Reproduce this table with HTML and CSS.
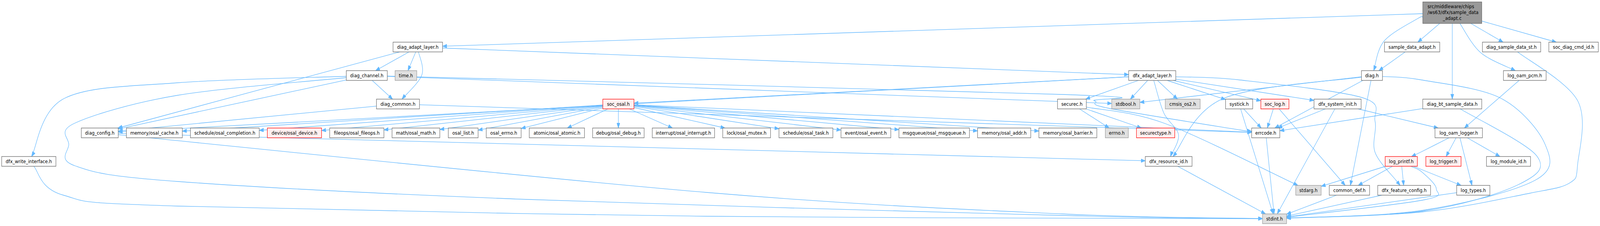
FILE: index.html
```html
<!DOCTYPE html>
<html lang="en">
<head>
<meta charset="utf-8">
<title>sample_data_adapt.c include graph</title>
<link rel="stylesheet" href="styles.css">
</head>
<body>
<div class="graph">
<svg id="graph" viewBox="0 0 4722 579" preserveAspectRatio="none" xmlns="http://www.w3.org/2000/svg">
  <defs>
    <marker id="arrow" markerUnits="userSpaceOnUse" markerWidth="14" markerHeight="10" refX="13" refY="4.75" orient="auto">
      <path class="arrowhead" d="M0,0 L13,4.75 L0,9.5 Z"/>
    </marker>
  </defs>
  <g id="edges"></g>
  <g id="nodes">
    <g class="node root" id="n-top"><rect x="4199" y="5" width="174" height="55"/><text class="left" x="4213" y="21.5">src/middleware/chips</text><text class="left" x="4213" y="36.3">/ws63/dfx/sample_data</text><text x="4286" y="51">_adapt.c</text></g>

    <g class="node" id="n-dal"><rect x="1160" y="108" width="146" height="25"/><text x="1233" y="124.8">diag_adapt_layer.h</text></g>
    <g class="node" id="n-sah"><rect x="4086" y="108" width="163" height="25"/><text x="4167.5" y="124.8">sample_data_adapt.h</text></g>
    <g class="node" id="n-dsd"><rect x="4375" y="108" width="172" height="25"/><text x="4461" y="124.8">diag_sample_data_st.h</text></g>
    <g class="node" id="n-sdc"><rect x="4571" y="108" width="146" height="25"/><text x="4644" y="124.8">soc_diag_cmd_id.h</text></g>

    <g class="node" id="n-dch"><rect x="1022" y="181" width="121" height="25"/><text x="1082.5" y="197.8">diag_channel.h</text></g>
    <g class="node sys" id="n-tim"><rect x="1166" y="181" width="64" height="25"/><text x="1198" y="197.8">time.h</text></g>
    <g class="node" id="n-dfa"><rect x="3331" y="181" width="139" height="25"/><text x="3400.5" y="197.8">dfx_adapt_layer.h</text></g>
    <g class="node" id="n-dia"><rect x="4018" y="181" width="62" height="25"/><text x="4049" y="197.8">diag.h</text></g>
    <g class="node" id="n-lop"><rect x="4437" y="181" width="126" height="25"/><text x="4500" y="197.8">log_oam_pcm.h</text></g>

    <g class="node" id="n-dco"><rect x="1111" y="254" width="127" height="25"/><text x="1174.5" y="270.8">diag_common.h</text></g>
    <g class="node trunc" id="n-sos"><rect x="1779" y="254" width="92" height="25"/><text x="1825" y="270.8">soc_osal.h</text></g>
    <g class="node" id="n-sec"><rect x="3121" y="254" width="85" height="25"/><text x="3163.5" y="270.8">securec.h</text></g>
    <g class="node sys" id="n-sbo"><rect x="3281" y="254" width="83" height="25"/><text x="3322.5" y="270.8">stdbool.h</text></g>
    <g class="node sys" id="n-cms"><rect x="3439" y="254" width="103" height="25"/><text x="3490.5" y="270.8">cmsis_os2.h</text></g>
    <g class="node" id="n-sys"><rect x="3617" y="254" width="80" height="25"/><text x="3657" y="270.8">systick.h</text></g>
    <g class="node trunc" id="n-slg"><rect x="3721" y="254" width="83" height="25"/><text x="3762.5" y="270.8">soc_log.h</text></g>
    <g class="node" id="n-dsi"><rect x="3878" y="254" width="139" height="25"/><text x="3947.5" y="270.8">dfx_system_init.h</text></g>
    <g class="node" id="n-dbt"><rect x="4199" y="254" width="174" height="25"/><text x="4286" y="270.8">diag_bt_sample_data.h</text></g>

    <g class="node" id="n-dcf"><rect x="240" y="328" width="109" height="25"/><text x="294.5" y="344.8">diag_config.h</text></g>
    <g class="node" id="n-oca"><rect x="373" y="328" width="165" height="25"/><text x="455.5" y="344.8">memory/osal_cache.h</text></g>
    <g class="node" id="n-ocp"><rect x="562" y="328" width="203" height="25"/><text x="663.5" y="344.8">schedule/osal_completion.h</text></g>
    <g class="node trunc" id="n-ode"><rect x="789" y="328" width="160" height="25"/><text x="869" y="344.8">device/osal_device.h</text></g>
    <g class="node" id="n-ofo"><rect x="973" y="328" width="160" height="25"/><text x="1053" y="344.8">fileops/osal_fileops.h</text></g>
    <g class="node" id="n-oma"><rect x="1157" y="328" width="141" height="25"/><text x="1227.5" y="344.8">math/osal_math.h</text></g>
    <g class="node" id="n-oli"><rect x="1323" y="328" width="88" height="25"/><text x="1367" y="344.8">osal_list.h</text></g>
    <g class="node" id="n-oer"><rect x="1435" y="328" width="103" height="25"/><text x="1486.5" y="344.8">osal_errno.h</text></g>
    <g class="node" id="n-oat"><rect x="1562" y="328" width="163" height="25"/><text x="1643.5" y="344.8">atomic/osal_atomic.h</text></g>
    <g class="node" id="n-odb"><rect x="1749" y="328" width="152" height="25"/><text x="1825" y="344.8">debug/osal_debug.h</text></g>
    <g class="node" id="n-oin"><rect x="1925" y="328" width="184" height="25"/><text x="2017" y="344.8">interrupt/osal_interrupt.h</text></g>
    <g class="node" id="n-omu"><rect x="2133" y="328" width="141" height="25"/><text x="2203.5" y="344.8">lock/osal_mutex.h</text></g>
    <g class="node" id="n-ota"><rect x="2299" y="328" width="159" height="25"/><text x="2378.5" y="344.8">schedule/osal_task.h</text></g>
    <g class="node" id="n-oev"><rect x="2482" y="328" width="147" height="25"/><text x="2555.5" y="344.8">event/osal_event.h</text></g>
    <g class="node" id="n-omq"><rect x="2653" y="328" width="208" height="25"/><text x="2757" y="344.8">msgqueue/osal_msgqueue.h</text></g>
    <g class="node" id="n-oad"><rect x="2885" y="328" width="157" height="25"/><text x="2963.5" y="344.8">memory/osal_addr.h</text></g>
    <g class="node" id="n-oba"><rect x="3066" y="328" width="171" height="25"/><text x="3151.5" y="344.8">memory/osal_barrier.h</text></g>
    <g class="node sys" id="n-ern"><rect x="3262" y="328" width="68" height="25"/><text x="3296" y="344.8">errno.h</text></g>
    <g class="node trunc" id="n-sct"><rect x="3354" y="328" width="113" height="25"/><text x="3410.5" y="344.8">securectype.h</text></g>
    <g class="node" id="n-erc"><rect x="3694" y="328" width="83" height="25"/><text x="3735.5" y="344.8">errcode.h</text></g>
    <g class="node" id="n-lol"><rect x="4235" y="328" width="140" height="25"/><text x="4305" y="344.8">log_oam_logger.h</text></g>

    <g class="node" id="n-dwi"><rect x="5" y="401" width="160" height="25"/><text x="85" y="417.8">dfx_write_interface.h</text></g>
    <g class="node" id="n-dri"><rect x="3380" y="401" width="138" height="25"/><text x="3449" y="417.8">dfx_resource_id.h</text></g>
    <g class="node trunc" id="n-lpf"><rect x="4088" y="401" width="95" height="25"/><text x="4135.5" y="417.8">log_printf.h</text></g>
    <g class="node trunc" id="n-ltr"><rect x="4208" y="401" width="104" height="25"/><text x="4260" y="417.8">log_trigger.h</text></g>
    <g class="node" id="n-lmi"><rect x="4387" y="401" width="130" height="25"/><text x="4452" y="417.8">log_module_id.h</text></g>

    <g class="node sys" id="n-sta"><rect x="3824" y="475" width="75" height="25"/><text x="3861.5" y="491.8">stdarg.h</text></g>
    <g class="node" id="n-cdf"><rect x="3923" y="475" width="119" height="25"/><text x="3982.5" y="491.8">common_def.h</text></g>
    <g class="node" id="n-dfc"><rect x="4066" y="475" width="156" height="25"/><text x="4144" y="491.8">dfx_feature_config.h</text></g>
    <g class="node" id="n-lty"><rect x="4299" y="475" width="98" height="25"/><text x="4348" y="491.8">log_types.h</text></g>

    <g class="node sys" id="n-sti"><rect x="3726" y="548" width="71" height="25"/><text x="3761.5" y="564.8">stdint.h</text></g>
  </g>
</svg>
</div>
<script src="script.js"></script>
</body>
</html>
```

FILE: styles.css
```css
html, body {
  margin: 0;
  padding: 0;
  background: #ffffff;
  overflow: hidden;
}

.graph {
  width: 100vw;
  height: 579px;
  overflow: hidden;
}

.graph svg {
  display: block;
  width: 100vw;
  height: 579px;
}

.node rect {
  fill: #ffffff;
  stroke: #666666;
  stroke-width: 1.3;
}

.node.sys rect {
  fill: #e0e0e0;
  stroke: #999999;
}

.node.trunc rect {
  fill: #fff0f0;
  stroke: #ff0000;
}

.node.root rect {
  fill: #999999;
  stroke: #666666;
}

.node text {
  font-family: "DejaVu Sans", "Liberation Sans", sans-serif;
  font-size: 13px;
  fill: #000000;
  text-anchor: middle;
}

.node text.left {
  text-anchor: start;
}

.edge {
  fill: none;
  stroke: #63b8ff;
  stroke-width: 1.3;
}

.arrowhead {
  fill: #63b8ff;
  stroke: #63b8ff;
  stroke-width: 1;
}
```

FILE: script.js
```js
(function () {
  var NS = 'http://www.w3.org/2000/svg';
  var osal = ['oca','ocp','ode','ofo','oma','oli','oer','oat','odb','oin','omu','ota','oev','omq','oad','oba'];
  var E = [
    ['top','dal'], ['top','dia',[[4185,47],[4085,105]]], ['top','sah'], ['top','dbt'],
    ['top','lop',[[4370,135]]], ['top','dsd'], ['top','sdc'],
    ['sah','dia'],
    ['dal','dfa'], ['dal','dch'], ['dal','tim'], ['dal','dco',[[1245,192]]], ['dal','dcf'],
    ['dch','dco'], ['dch','dcf'], ['dch','dwi',[[525,212],[190,252]]], ['dch','sbo'],
    ['dch','erc',[[3135,242],[3229,258],[3270,277],[3660,333]]],
    ['dch','sti',[[525,244],[222,315],[203,370],[222,425],[525,465],[1560,511],[3135,552]]],
    ['dco','dcf'], ['dco','erc'],
    ['dcf','dri'], ['dcf','sti',[[2085,493],[3135,548]]],
    ['dwi','sti',[[187,500],[525,528],[2085,554]]],
    ['sos','erc'],
    ['dfa','sec'], ['dfa','sbo'], ['dfa','cms'], ['dfa','dri',[[3435,290],[3478,345]]], ['dfa','sys'],
    ['dfa','sos'], ['dfa','slg'], ['dfa','dsi'],
    ['dfa','dfc',[[3660,205],[4020,250],[4058,310],[4058,390],[4120,462]]], ['dfa','dcf'],
    ['dia','sbo'], ['dia','dri',[[3611,252]]], ['dia','erc'], ['dia','cdf'],
    ['dia','sti',[[4197,205],[4430,252],[4560,370],[4530,462],[4197,539]]],
    ['sec','ern'], ['sec','sct'], ['sec','sta',[[3440,317]]],
    ['sys','erc'], ['sys','sti'],
    ['slg','erc'], ['slg','cdf'],
    ['dsi','erc'], ['dsi','sti'], ['dsi','lol'],
    ['dbt','erc'], ['dbt','sti',[[4535,399],[4481,473],[4197,541]]],
    ['dsd','sti',[[4656,258],[4656,421],[4632,469],[4515,495],[4197,543]]],
    ['lop','lol'],
    ['lol','ltr'], ['lol','lty'], ['lol','lmi'], ['lol','lpf',[[4197,388]]],
    ['lpf','sta'], ['lpf','cdf'], ['lpf','dfc'], ['lpf','lty'],
    ['lpf','sti',[[4197,441],[4239,484],[4197,513]]],
    ['cdf','sti'], ['erc','sti'], ['dri','sti'], ['dfc','sti'], ['lty','sti']
  ];
  osal.forEach(function (t) { E.push(['sos', t]); });

  function box(id) {
    var r = document.querySelector('#n-' + id + ' rect');
    var x = +r.getAttribute('x'), y = +r.getAttribute('y');
    var w = +r.getAttribute('width'), h = +r.getAttribute('height');
    return { x: x, y: y, w: w, h: h, cx: x + w / 2, cy: y + h / 2 };
  }

  function clip(b, px, py) {
    var dx = px - b.cx, dy = py - b.cy;
    var tx = dx ? (b.w / 2) / Math.abs(dx) : Infinity;
    var ty = dy ? (b.h / 2) / Math.abs(dy) : Infinity;
    var t = Math.min(tx, ty);
    return [b.cx + dx * t, b.cy + dy * t];
  }

  function f(n) { return Math.round(n * 10) / 10; }

  function pathFor(pts) {
    if (pts.length === 2) {
      return 'M' + f(pts[0][0]) + ',' + f(pts[0][1]) + ' L' + f(pts[1][0]) + ',' + f(pts[1][1]);
    }
    var d = 'M' + f(pts[0][0]) + ',' + f(pts[0][1]);
    for (var i = 0; i < pts.length - 1; i++) {
      var p0 = pts[i - 1] || pts[i], p1 = pts[i], p2 = pts[i + 1], p3 = pts[i + 2] || pts[i + 1];
      var c1 = [p1[0] + (p2[0] - p0[0]) / 6, p1[1] + (p2[1] - p0[1]) / 6];
      var c2 = [p2[0] - (p3[0] - p1[0]) / 6, p2[1] - (p3[1] - p1[1]) / 6];
      d += ' C' + f(c1[0]) + ',' + f(c1[1]) + ' ' + f(c2[0]) + ',' + f(c2[1]) + ' ' + f(p2[0]) + ',' + f(p2[1]);
    }
    return d;
  }

  var g = document.getElementById('edges');
  E.forEach(function (e) {
    var s = box(e[0]), t = box(e[1]), w = e[2] || [];
    var first = w.length ? w[0] : [t.cx, t.cy];
    var last = w.length ? w[w.length - 1] : [s.cx, s.cy];
    var pts = [clip(s, first[0], first[1])].concat(w, [clip(t, last[0], last[1])]);
    var p = document.createElementNS(NS, 'path');
    p.setAttribute('class', 'edge');
    p.setAttribute('d', pathFor(pts));
    p.setAttribute('marker-end', 'url(#arrow)');
    g.appendChild(p);
  });
})();
```
